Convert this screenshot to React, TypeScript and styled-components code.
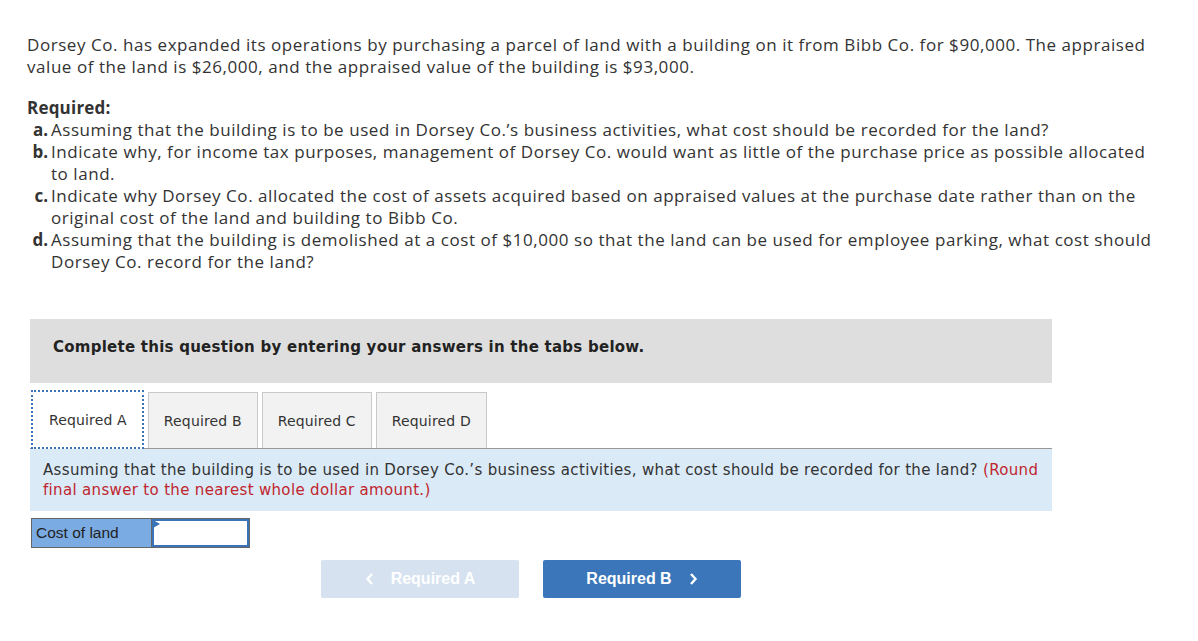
import styled, { createGlobalStyle } from "styled-components";

const GlobalStyle = createGlobalStyle`
  body {
    margin: 0;
    background: #fff;
    color: #333;
    font-family: "Open Sans", Arial, sans-serif;
  }
`;

const tabs = ["Required A", "Required B", "Required C", "Required D"];

const questions = [
  {
    key: "a.",
    text: "Assuming that the building is to be used in Dorsey Co.’s business activities, what cost should be recorded for the land?",
  },
  {
    key: "b.",
    text: "Indicate why, for income tax purposes, management of Dorsey Co. would want as little of the purchase price as possible allocated to land.",
  },
  {
    key: "c.",
    text: "Indicate why Dorsey Co. allocated the cost of assets acquired based on appraised values at the purchase date rather than on the original cost of the land and building to Bibb Co.",
  },
  {
    key: "d.",
    text: "Assuming that the building is demolished at a cost of $10,000 so that the land can be used for employee parking, what cost should Dorsey Co. record for the land?",
  },
];

function App() {
  return (
    <Page>
      <GlobalStyle />
      <Intro>
        Dorsey Co. has expanded its operations by purchasing a parcel of land with a building on it from Bibb Co. for
        $90,000. The appraised value of the land is $26,000, and the appraised value of the building is $93,000.
      </Intro>
      <RequiredTitle>Required:</RequiredTitle>
      <QuestionList>
        {questions.map((q) => (
          <QuestionRow key={q.key}>
            <QKey>{q.key}</QKey>
            <span>{q.text}</span>
          </QuestionRow>
        ))}
      </QuestionList>

      <Workspace>
        <Banner>Complete this question by entering your answers in the tabs below.</Banner>
        <TabBar>
          {tabs.map((t, i) => (
            <Tab key={t} $active={i === 0}>
              {t}
            </Tab>
          ))}
        </TabBar>
        <Prompt>
          Assuming that the building is to be used in Dorsey Co.’s business activities, what cost should be recorded for
          the land? <Hint>(Round final answer to the nearest whole dollar amount.)</Hint>
        </Prompt>
        <AnswerRow>
          <AnswerLabel>Cost of land</AnswerLabel>
          <AnswerCell>
            <Flag />
          </AnswerCell>
        </AnswerRow>
        <NavRow>
          <NavButton $disabled>
            <Chevron viewBox="0 0 10 14">
              <path d="M7 2 L2.5 7 L7 12" />
            </Chevron>
            Required A
          </NavButton>
          <NavButton>
            Required B
            <Chevron viewBox="0 0 10 14">
              <path d="M3 2 L7.5 7 L3 12" />
            </Chevron>
          </NavButton>
        </NavRow>
      </Workspace>
    </Page>
  );
}
export default App;

const Page = styled.div`
  padding: 34px 0 0 27px;
  width: 1130px;
`;
const Intro = styled.p`
  margin: 0;
  font-size: 17px;
  line-height: 22px;
  letter-spacing: 0.55px;
`;
const RequiredTitle = styled.div`
  margin-top: 19px;
  font-size: 17px;
  line-height: 22px;
  font-weight: 700;
  letter-spacing: 0.2px;
`;
const QuestionList = styled.div`
  display: flex;
  flex-direction: column;
`;
const QuestionRow = styled.div`
  display: grid;
  grid-template-columns: 24px 1fr;
  font-size: 17px;
  line-height: 22px;
  letter-spacing: 0.55px;
`;
const QKey = styled.span`
  font-weight: 700;
  letter-spacing: 0;
  text-align: right;
  padding-right: 3px;
`;
const Workspace = styled.div`
  margin-top: 46px;
  margin-left: 3px;
  width: 1022px;
  font-family: "DejaVu Sans", Verdana, sans-serif;
`;
const Banner = styled.div`
  background: #dedede;
  height: 64px;
  box-sizing: border-box;
  padding: 18px 0 0 23px;
  font-size: 15px;
  line-height: 20px;
  letter-spacing: 0.25px;
  font-weight: 700;
  color: #222;
`;
const TabBar = styled.div`
  margin-top: 9px;
  display: flex;
  gap: 4px;
  border-bottom: 1px solid #999;
`;
const Tab = styled.div<{ $active?: boolean }>`
  box-sizing: border-box;
  padding: 0 15px;
  display: flex;
  align-items: center;
  font-size: 14px;
  letter-spacing: 0.15px;
  color: #333;
  background: ${(p) => (p.$active ? "#fff" : "#f2f2f2")};
  border: ${(p) => (p.$active ? "2px dotted #3b73b9" : "1px solid #c9c9c9")};
  border-bottom: ${(p) => (p.$active ? "2px dotted #3b73b9" : "none")};
  height: ${(p) => (p.$active ? "59px" : "56px")};
  margin-top: ${(p) => (p.$active ? "-2px" : "0")};
  margin-bottom: ${(p) => (p.$active ? "-1px" : "0")};
  margin-left: ${(p) => (p.$active ? "1px" : "0")};
  padding-left: ${(p) => (p.$active ? "16px" : "15px")};
`;
const Prompt = styled.div`
  background: #daeaf7;
  padding: 11px 6px 11px 13px;
  font-size: 15px;
  line-height: 20px;
  letter-spacing: 0.33px;
  color: #333;
`;
const Hint = styled.span`
  color: #c0262d;
`;
const AnswerRow = styled.div`
  margin-top: 7px;
  margin-left: 1px;
  display: flex;
  width: 219px;
  height: 30px;
  box-sizing: border-box;
  border: 1px solid #666;
`;
const AnswerLabel = styled.div`
  width: 120px;
  box-sizing: border-box;
  background: #7aabe3;
  font-family: "Liberation Sans", Arial, sans-serif;
  font-size: 15.5px;
  color: #222;
  display: flex;
  align-items: center;
  padding-left: 4px;
  border-right: 1px solid #666;
`;
const AnswerCell = styled.div`
  position: relative;
  flex: 1;
  border: 2px solid #3b73b9;
  background: #fff;
`;
const Flag = styled.span`
  position: absolute;
  left: -1px;
  top: -1px;
  width: 0;
  height: 0;
  border-top: 4px solid transparent;
  border-bottom: 4px solid transparent;
  border-left: 7px solid #3b73b9;
`;
const NavRow = styled.div`
  margin-top: 12px;
  display: flex;
  gap: 24px;
  padding-left: 291px;
`;
const NavButton = styled.div<{ $disabled?: boolean }>`
  width: 198px;
  height: 38px;
  border-radius: 2px;
  display: flex;
  align-items: center;
  justify-content: center;
  gap: 16px;
  font-family: "Liberation Sans", Arial, sans-serif;
  font-weight: 700;
  font-size: 16px;
  color: #fff;
  background: ${(p) => (p.$disabled ? "#d6e2f0" : "#3a76b9")};
`;
const Chevron = styled.svg`
  width: 10px;
  height: 14px;
  fill: none;
  stroke: #fff;
  stroke-width: 2.4;
`;
